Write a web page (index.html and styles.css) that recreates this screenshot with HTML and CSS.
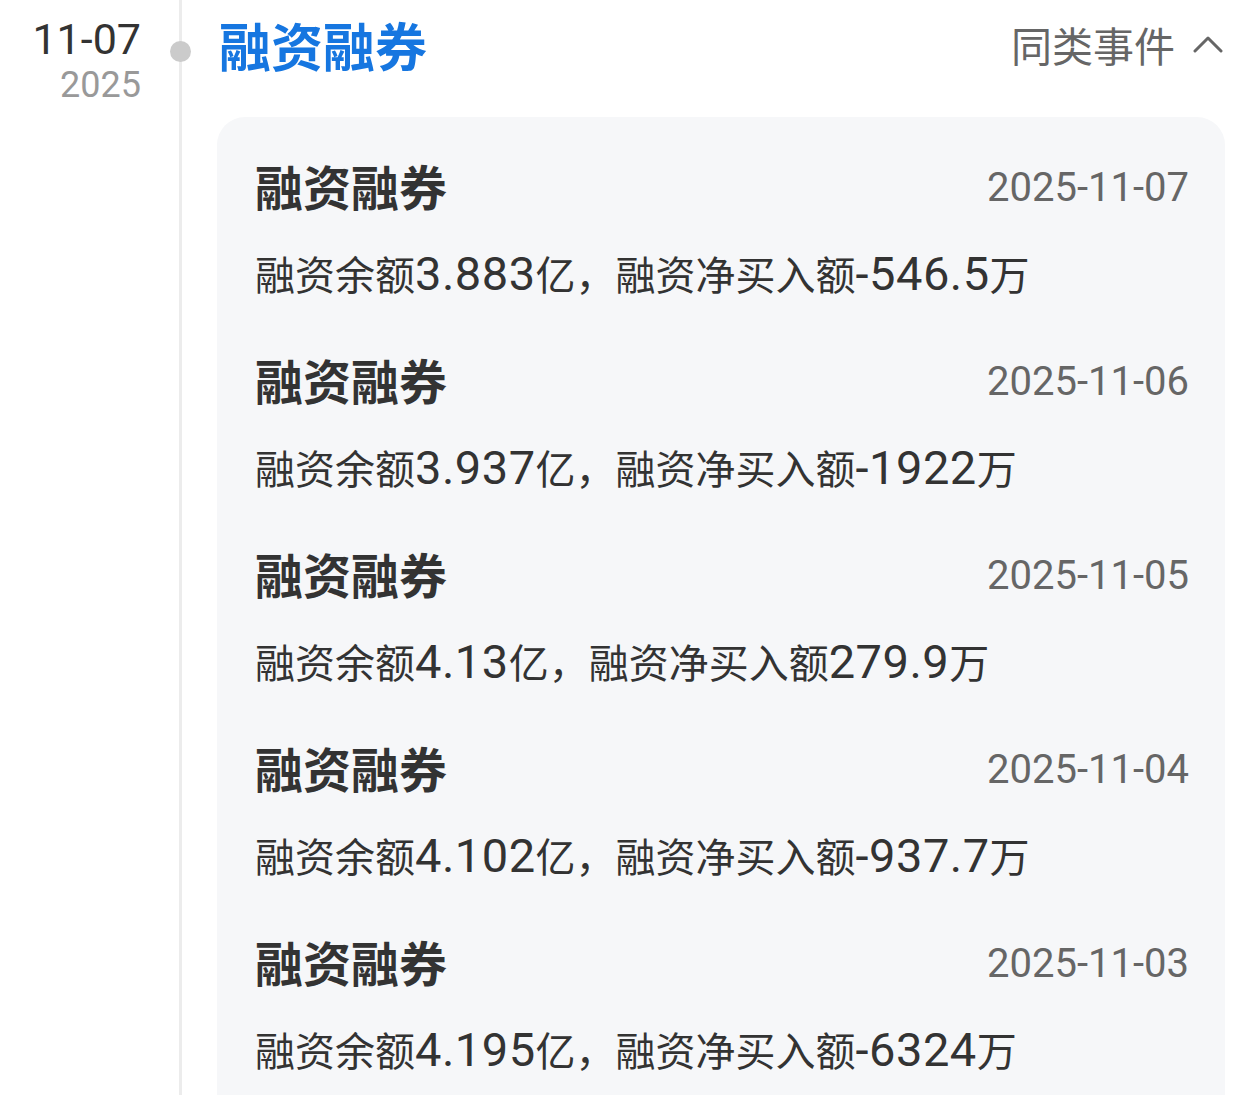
FILE: index.html
```html
<!DOCTYPE html>
<html lang="zh-CN">
<head>
    <meta charset="UTF-8">
    <meta name="viewport" content="width=device-width, initial-scale=1.0">
    <title>融资融券</title>
    <link rel="stylesheet" href="styles.css">
</head>
<body>

<div class="timeline">
    <div class="date-col">
        <div class="day">11-07</div>
        <div class="year">2025</div>
    </div>

    <div class="axis">
        <span class="dot"></span>
    </div>

    <div class="content">
        <div class="event-head">
            <h1 class="event-title">融资融券</h1>
            <div class="similar">
                <span>同类事件</span>
                <svg class="chevron" width="30" height="20" viewBox="0 0 30 20">
                    <polyline points="2,17 15,4 28,17" fill="none" stroke="#666" stroke-width="3" stroke-linecap="round" stroke-linejoin="round"/>
                </svg>
            </div>
        </div>

        <div class="card">
            <div class="item">
                <div class="item-head">
                    <span class="item-title">融资融券</span>
                    <span class="item-date">2025-11-07</span>
                </div>
                <p class="item-desc">融资余额<span class="num">3.883</span>亿，融资净买入额<span class="num">-546.5</span>万</p>
            </div>
            <div class="item">
                <div class="item-head">
                    <span class="item-title">融资融券</span>
                    <span class="item-date">2025-11-06</span>
                </div>
                <p class="item-desc">融资余额<span class="num">3.937</span>亿，融资净买入额<span class="num">-1922</span>万</p>
            </div>
            <div class="item">
                <div class="item-head">
                    <span class="item-title">融资融券</span>
                    <span class="item-date">2025-11-05</span>
                </div>
                <p class="item-desc">融资余额<span class="num">4.13</span>亿，融资净买入额<span class="num">279.9</span>万</p>
            </div>
            <div class="item">
                <div class="item-head">
                    <span class="item-title">融资融券</span>
                    <span class="item-date">2025-11-04</span>
                </div>
                <p class="item-desc">融资余额<span class="num">4.102</span>亿，融资净买入额<span class="num">-937.7</span>万</p>
            </div>
            <div class="item">
                <div class="item-head">
                    <span class="item-title">融资融券</span>
                    <span class="item-date">2025-11-03</span>
                </div>
                <p class="item-desc">融资余额<span class="num">4.195</span>亿，融资净买入额<span class="num">-6324</span>万</p>
            </div>
        </div>
    </div>
</div>

</body>
</html>
```

FILE: styles.css
```css
body {
    font-family: 'Roboto', 'Noto Sans CJK SC', sans-serif;
    background-color: #fff;
    margin: 0;
    padding: 0;
    height: 1095px;
    overflow: hidden;
}

.timeline {
    display: flex;
    height: 100%;
}

.date-col {
    width: 141px;
    flex-shrink: 0;
    text-align: right;
    padding-top: 14px;
}

.day {
    font-size: 43px;
    line-height: 50px;
    color: #333;
}

.year {
    font-size: 36px;
    line-height: 42px;
    color: #999;
}

.axis {
    width: 78px;
    flex-shrink: 0;
    position: relative;
}

.axis::before {
    content: '';
    position: absolute;
    left: 38px;
    top: 0;
    bottom: 0;
    width: 3px;
    background-color: #ececec;
}

.dot {
    position: absolute;
    left: 29px;
    top: 41px;
    width: 21px;
    height: 21px;
    border-radius: 50%;
    background-color: #cbcbcb;
}

.content {
    flex: 1;
    padding-right: 35px;
}

.event-head {
    display: flex;
    justify-content: space-between;
    align-items: center;
    height: 88px;
    padding-bottom: 10px;
    padding-right: 2px;
}

.event-title {
    margin: 0;
    font-size: 52px;
    font-weight: 700;
    color: #1676e0;
}

.similar {
    display: flex;
    align-items: center;
    gap: 18px;
    font-size: 41px;
    color: #666;
}

.card {
    margin-top: 19px;
    margin-left: -2px;
    background-color: #f6f7f9;
    border-radius: 28px 28px 0 0;
    padding: 28px 36px 0 38px;
    height: 1000px;
}

.item {
    height: 194px;
}

.item-head {
    display: flex;
    justify-content: space-between;
    align-items: center;
    height: 80px;
}

.item-title {
    font-size: 48px;
    font-weight: 700;
    color: #333;
}

.item-date {
    font-size: 40px;
    color: #666;
    padding-top: 4px;
}

.item-desc {
    margin: 0;
    padding-top: 6px;
    font-size: 40px;
    line-height: 92px;
    color: #333;
}

.num {
    font-size: 47px;
    line-height: 1;
    letter-spacing: 0.5px;
}
```
